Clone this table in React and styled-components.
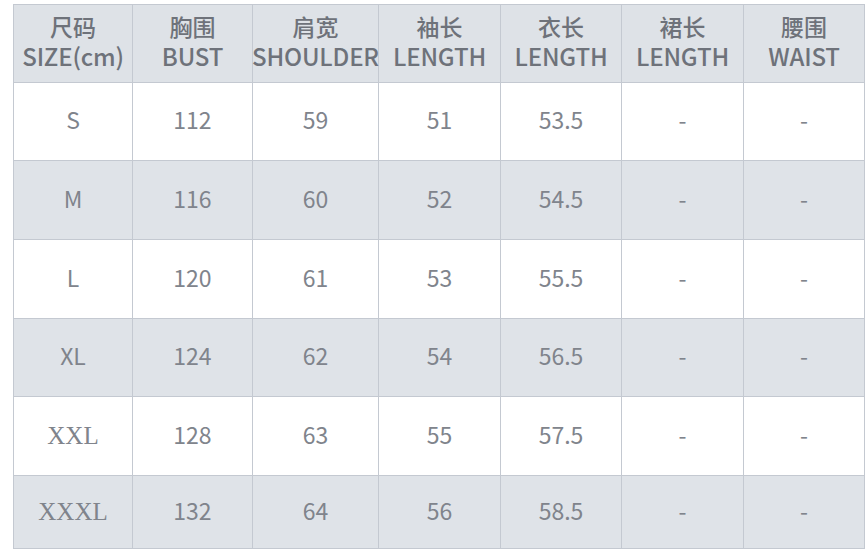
import styled, { createGlobalStyle } from "styled-components";

const GlobalStyle = createGlobalStyle`
  html, body {
    margin: 0;
    padding: 0;
    background: #ffffff;
  }
`;

const headers = [
  ["尺码", "SIZE(cm)"],
  ["胸围", "BUST"],
  ["肩宽", "SHOULDER"],
  ["袖长", "LENGTH"],
  ["衣长", "LENGTH"],
  ["裙长", "LENGTH"],
  ["腰围", "WAIST"],
];

const rows = [
  ["S", "112", "59", "51", "53.5", "-", "-"],
  ["M", "116", "60", "52", "54.5", "-", "-"],
  ["L", "120", "61", "53", "55.5", "-", "-"],
  ["XL", "124", "62", "54", "56.5", "-", "-"],
  ["XXL", "128", "63", "55", "57.5", "-", "-"],
  ["XXXL", "132", "64", "56", "58.5", "-", "-"],
];

export default function App() {
  return (
    <Page>
      <GlobalStyle />
      <Chart>
        {headers.map(([zh, en], i) => (
          <HeadCell key={"h" + i}>
            <HeadLine>{zh}</HeadLine>
            <HeadLine $latin>{en}</HeadLine>
          </HeadCell>
        ))}
        {rows.map((row, r) =>
          row.map((val, c) => (
            <Cell
              key={r + "-" + c}
              $alt={r % 2 === 1}
              $serif={c === 0 && val.startsWith("XX")}
            >
              {val}
            </Cell>
          ))
        )}
      </Chart>
    </Page>
  );
}

const Page = styled.div`
  width: 868px;
  height: 549px;
  overflow: hidden;
  padding: 4px 0 0 13px;
  box-sizing: border-box;
  background: #ffffff;
`;

const Chart = styled.div`
  display: grid;
  grid-template-columns: 118px 119px 125px 121px 120px 121px 120px;
  grid-template-rows: 77px 77px 78px 78px 77px 78px 72px;
  gap: 1px;
  width: 852px;
  box-sizing: border-box;
  border: 1px solid #c4c9d1;
  background: #c4c9d1;
`;

const HeadCell = styled.div`
  display: flex;
  flex-direction: column;
  align-items: center;
  justify-content: center;
  gap: 6px;
  padding-bottom: 6px;
  background: #dee2e7;
  color: #6e727a;
  font-family: "Noto Sans CJK SC", "Noto Sans", sans-serif;
  font-weight: 500;
  white-space: nowrap;
`;

const HeadLine = styled.span`
  display: block;
  font-size: ${(p) => (p.$latin ? "24px" : "23px")};
  line-height: 24px;
  letter-spacing: ${(p) => (p.$latin ? "-0.2px" : "0")};
`;

const Cell = styled.div`
  display: flex;
  align-items: center;
  justify-content: center;
  background: ${(p) => (p.$alt ? "#dfe3e8" : "#ffffff")};
  color: #80848c;
  font-family: ${(p) =>
    p.$serif
      ? '"Liberation Serif", "DejaVu Serif", serif'
      : '"Noto Sans CJK SC", "Noto Sans", sans-serif'};
  font-size: ${(p) => (p.$serif ? "25px" : "23px")};
  padding-bottom: ${(p) => (p.$serif ? "0" : "5px")};
`;
